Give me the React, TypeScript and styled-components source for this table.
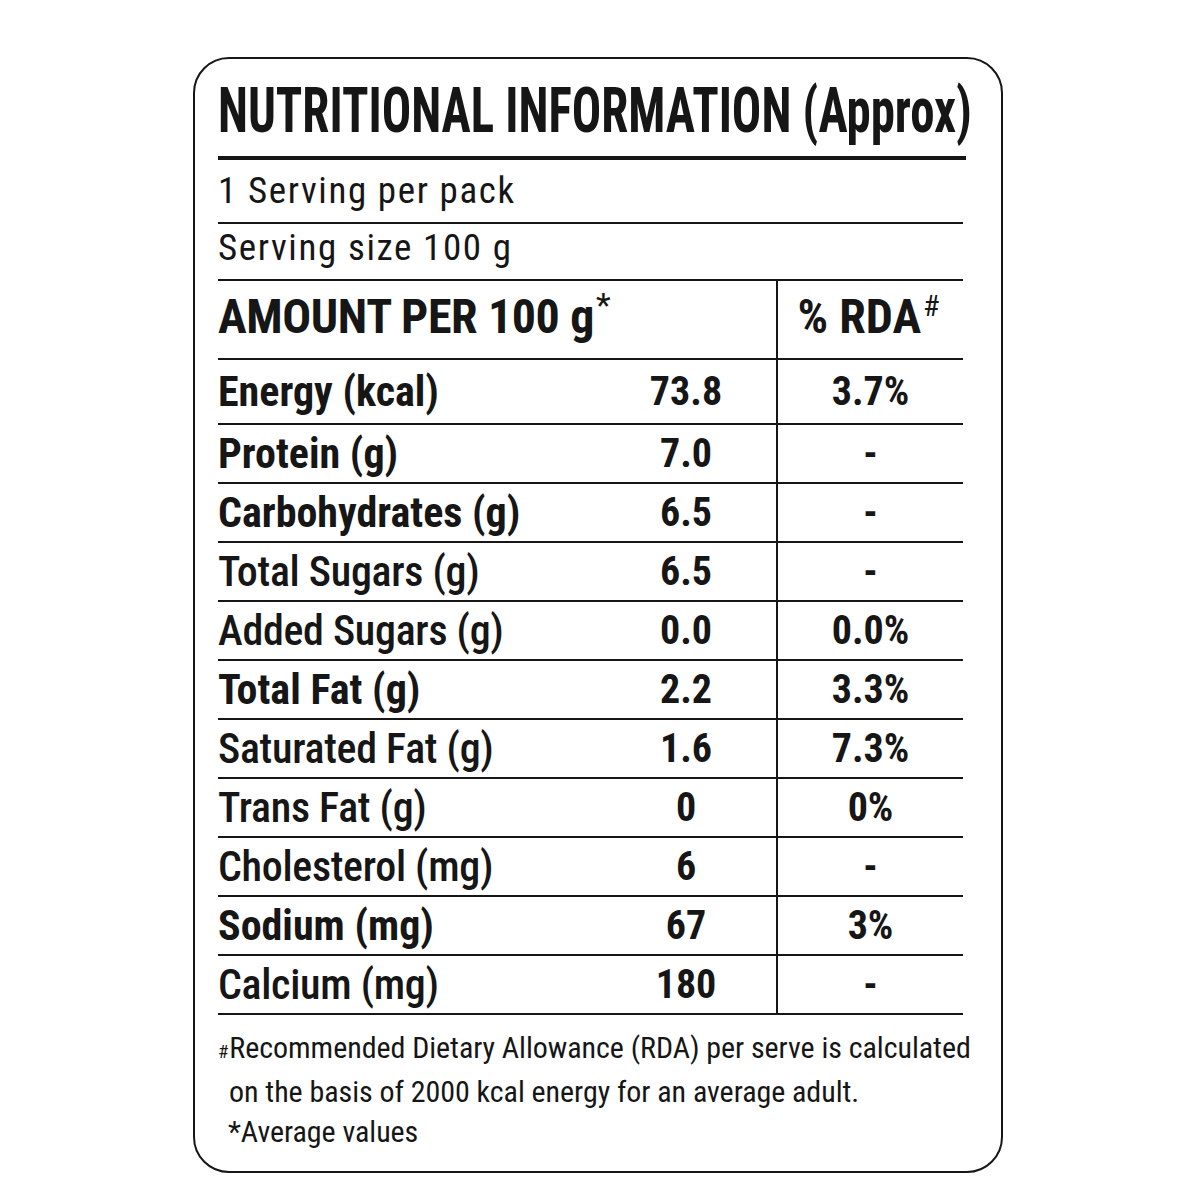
import React from "react";
import styled, { createGlobalStyle } from "styled-components";

const GlobalStyle = createGlobalStyle`
  html, body { margin: 0; padding: 0; background: #ffffff; }
  body { font-family: "Roboto Condensed", "Roboto", "Liberation Sans", sans-serif; color: #161616; }
`;

const INK = "#161616";

const Page = styled.div`
  padding: 57px 0 0 193px;
`;

const Card = styled.section`
  box-sizing: border-box;
  width: 810px;
  height: 1116px;
  border: 2px solid ${INK};
  border-radius: 36px;
  padding: 20px 38px 0 23px;
  display: flex;
  flex-direction: column;
`;

const Title = styled.h1`
  margin: 0;
  font-family: "Roboto Condensed", "Roboto", sans-serif;
  font-weight: 700;
  font-size: 63px;
  line-height: 63px;
  height: 63px;
  white-space: nowrap;
  color: ${INK};
  transform: scaleX(0.776);
  transform-origin: left center;
`;

const TitleRule = styled.div`
  height: 4px;
  background: ${INK};
  margin: 14px -3px 0 0;
`;

const InfoRow = styled.div<{ $h: number }>`
  box-sizing: border-box;
  height: ${(p) => p.$h}px;
  border-bottom: 2px solid ${INK};
  display: flex;
  align-items: flex-end;
  padding-bottom: 10px;
  font-size: 37px;
  line-height: 43px;
  font-weight: 400;
  letter-spacing: 1.6px;
`;

const Table = styled.div`
  display: grid;
  grid-template-columns: 378px 180px 187px;
`;

const Cell = styled.div<{ $h: number }>`
  box-sizing: border-box;
  height: ${(p) => p.$h}px;
  border-bottom: 2px solid ${INK};
  display: flex;
  align-items: center;
  white-space: nowrap;
`;

const HeadCell = styled(Cell)`
  grid-column: span 2;
  font-weight: 700;
  font-size: 48px;
  letter-spacing: -0.4px;
  padding-bottom: 6px;
`;

const HeadRda = styled(Cell)`
  border-left: 2px solid ${INK};
  justify-content: center;
  font-weight: 700;
  font-size: 48px;
  padding-bottom: 6px;
  padding-right: 4px;
`;

const Sup = styled.span<{ $size: number; $lift: number }>`
  font-size: ${(p) => p.$size}px;
  font-weight: 400;
  position: relative;
  top: -${(p) => p.$lift}px;
  margin-left: 2px;
`;

const LabelCell = styled(Cell)<{ $bold: boolean }>`
  font-size: 42px;
  font-weight: ${(p) => (p.$bold ? 700 : 500)};
  letter-spacing: ${(p) => (p.$bold ? "0px" : "-0.3px")};
`;

const ValueCell = styled(Cell)`
  justify-content: center;
  font-size: 40px;
  font-weight: 700;
`;

const RdaCell = styled(Cell)`
  border-left: 2px solid ${INK};
  justify-content: center;
  font-size: 40px;
  font-weight: 700;
`;

const Notes = styled.div`
  margin-top: 13px;
  font-size: 30px;
  line-height: 40px;
  font-weight: 400;
  letter-spacing: -0.05px;
`;

const NoteLine = styled.div<{ $indent: number }>`
  padding-left: ${(p) => p.$indent}px;
  white-space: nowrap;
`;

const Hash = styled.span`
  font-size: 19px;
  margin-right: 1px;
`;

type Row = { label: string; value: string; rda: string; bold: boolean };

const rows: Row[] = [
  { label: "Energy (kcal)", value: "73.8", rda: "3.7%", bold: true },
  { label: "Protein (g)", value: "7.0", rda: "-", bold: true },
  { label: "Carbohydrates (g)", value: "6.5", rda: "-", bold: true },
  { label: "Total Sugars (g)", value: "6.5", rda: "-", bold: false },
  { label: "Added Sugars (g)", value: "0.0", rda: "0.0%", bold: false },
  { label: "Total Fat (g)", value: "2.2", rda: "3.3%", bold: true },
  { label: "Saturated Fat (g)", value: "1.6", rda: "7.3%", bold: false },
  { label: "Trans Fat (g)", value: "0", rda: "0%", bold: false },
  { label: "Cholesterol (mg)", value: "6", rda: "-", bold: false },
  { label: "Sodium (mg)", value: "67", rda: "3%", bold: true },
  { label: "Calcium (mg)", value: "180", rda: "-", bold: false },
];

export default function App() {
  return (
    <>
      <GlobalStyle />
      <Page>
        <Card>
          <Title>NUTRITIONAL INFORMATION (Approx)</Title>
          <TitleRule />
          <InfoRow $h={64}>1 Serving per pack</InfoRow>
          <InfoRow $h={57}>Serving size 100 g</InfoRow>
          <Table>
            <HeadCell $h={79}>
              AMOUNT PER 100 g<Sup $size={34} $lift={12}>*</Sup>
            </HeadCell>
            <HeadRda $h={79}>
              % RDA<Sup $size={30} $lift={11}>#</Sup>
            </HeadRda>
            {rows.map((r, i) => {
              const h = i === 0 ? 65 : 59;
              return (
                <React.Fragment key={r.label}>
                  <LabelCell $h={h} $bold={r.bold}>{r.label}</LabelCell>
                  <ValueCell $h={h}>{r.value}</ValueCell>
                  <RdaCell $h={h}>{r.rda}</RdaCell>
                </React.Fragment>
              );
            })}
          </Table>
          <Notes>
            <NoteLine $indent={0}>
              <Hash>#</Hash>Recommended Dietary Allowance (RDA) per serve is calculated
            </NoteLine>
            <NoteLine $indent={11}>on the basis of 2000 kcal energy for an average adult.</NoteLine>
            <NoteLine $indent={10}>*Average values</NoteLine>
          </Notes>
        </Card>
      </Page>
    </>
  );
}
